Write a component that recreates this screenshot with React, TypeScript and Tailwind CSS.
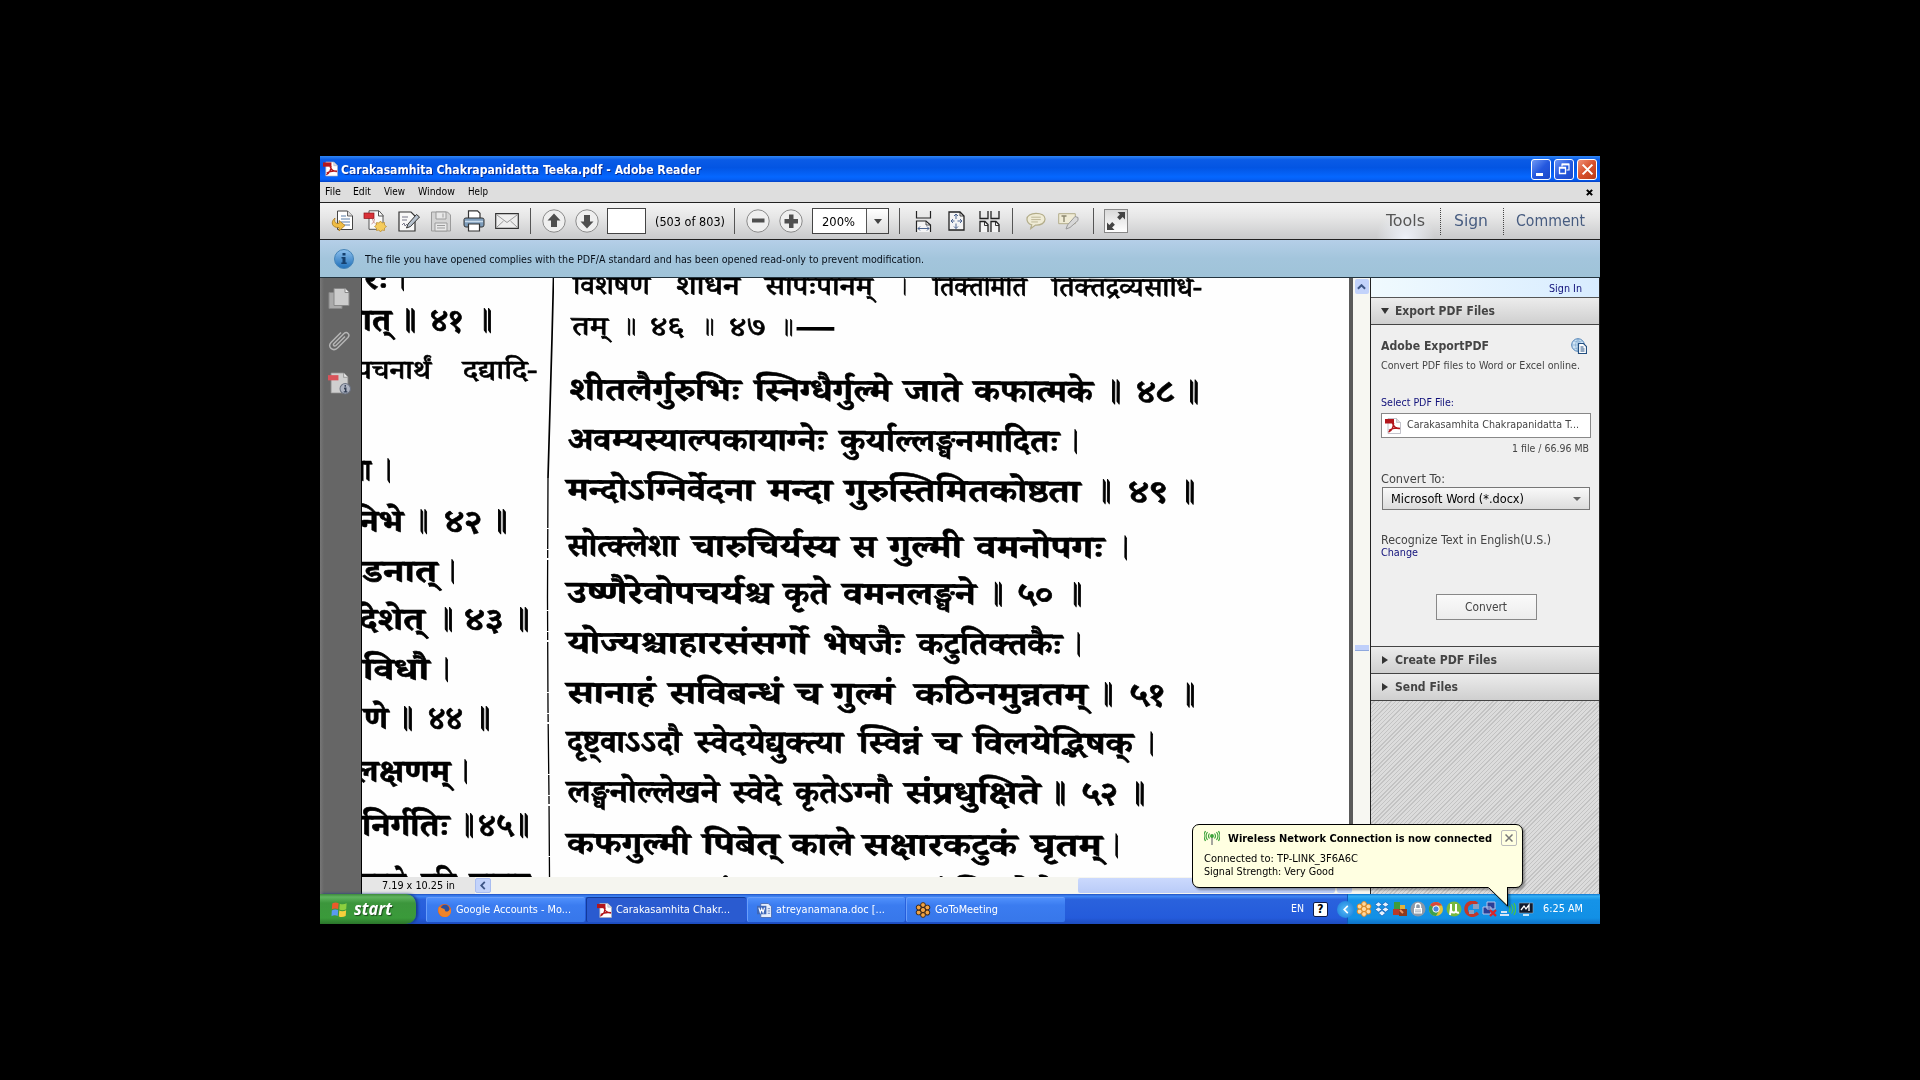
import React, { useLayoutEffect, useRef } from "react";
import clsx from "clsx";

interface FitProps {
  w: number;
  className?: string;
  ml?: number;
  children: React.ReactNode;
}

// Text stretched to an exact width, whatever font is available
function Fit({ w, className, ml = 0, children }: FitProps) {
  const ref = useRef<HTMLSpanElement>(null);
  useLayoutEffect(() => {
    const el = ref.current;
    if (!el) return;
    el.style.transform = "none";
    const natural = el.getBoundingClientRect().width;
    if (natural > 0) el.style.transform = `scaleX(${w / natural})`;
  }, [w, children]);
  return (
    <span className={clsx("block flex-none", className)} style={{ width: w, marginLeft: ml }}>
      <span ref={ref} className="inline-block origin-left whitespace-pre">
        {children}
      </span>
    </span>
  );
}

type Word = [x: number, end: number, text: string];
interface Line {
  y: number;
  small?: boolean;
  words: Word[];
}

const leftLines: Line[] = [
  { y: 268, words: [[364, 388, "रः"], [399, 405, "।"]] },
  { y: 310, words: [[344, 391, "नात्"], [403, 416, "॥"], [430, 463, "४१"], [481, 492, "॥"]] },
  { y: 361, small: true, words: [[356, 431, "पचनार्थं"], [463, 537, "दद्यादि-"]] },
  { y: 460, words: [[352, 371, "ना"], [385, 391, "।"]] },
  { y: 511, words: [[350, 403, "निभे"], [418, 428, "॥"], [444, 482, "४२"], [495, 507, "॥"]] },
  { y: 561, words: [[362, 437, "डनात्"], [449, 455, "।"]] },
  { y: 609, words: [[359, 424, "देशेत्"], [442, 453, "॥"], [464, 503, "४३"], [517, 529, "॥"]] },
  { y: 659, words: [[363, 429, "विधौ"], [443, 449, "।"]] },
  { y: 708, words: [[364, 388, "णे"], [401, 413, "॥"], [428, 463, "४४"], [478, 490, "॥"]] },
  { y: 761, words: [[354, 450, "लक्षणम्"], [462, 468, "।"]] },
  { y: 815, words: [[362, 449, "निर्गतिः"], [463, 474, "॥"], [478, 513, "४५"], [517, 529, "॥"]] },
  { y: 873, words: [[358, 406, "लवणे"], [422, 456, "हृदि"], [470, 530, "सामान"]] },
];

const rightLines: Line[] = [
  { y: 276, small: true, words: [[573, 650, "विशेषेण"], [676, 740, "शोधनं"], [765, 873, "सर्पिःपानम्"], [901, 907, "।"], [933, 1027, "तिक्तमिति"], [1052, 1202, "तिक्तद्रव्यसाधि-"]] },
  { y: 317, small: true, words: [[572, 608, "तम्"], [624, 637, "॥"], [650, 684, "४६"], [703, 715, "॥"], [729, 766, "४७"], [782, 794, "॥"], [798, 833, "—"]] },
  { y: 379, words: [[569, 741, "शीतलैर्गुरुभिः"], [755, 891, "स्निग्धैर्गुल्मे"], [904, 961, "जाते"], [974, 1093, "कफात्मके"], [1109, 1121, "॥"], [1136, 1175, "४८"], [1187, 1199, "॥"]] },
  { y: 429, words: [[568, 826, "अवम्यस्याल्पकायाग्नेः"], [840, 1059, "कुर्याल्लङ्घनमादितः"], [1072, 1078, "।"]] },
  { y: 479, words: [[567, 754, "मन्दोऽग्निर्वेदना"], [769, 832, "मन्दा"], [845, 1080, "गुरुस्तिमितकोष्ठता"], [1100, 1111, "॥"], [1128, 1168, "४९"], [1183, 1195, "॥"]] },
  { y: 535, words: [[567, 678, "सोत्क्लेशा"], [692, 838, "चारुचिर्यस्य"], [852, 876, "स"], [889, 962, "गुल्मी"], [976, 1104, "वमनोपगः"], [1122, 1128, "।"]] },
  { y: 582, words: [[567, 772, "उष्णैरेवोपचर्यश्च"], [784, 829, "कृते"], [843, 976, "वमनलङ्घने"], [992, 1003, "॥"], [1017, 1053, "५०"], [1071, 1082, "॥"]] },
  { y: 632, words: [[567, 808, "योज्यश्चाहारसंसर्गो"], [823, 903, "भेषजैः"], [918, 1062, "कटुतिक्तकैः"], [1075, 1081, "।"]] },
  { y: 682, words: [[567, 655, "सानाहं"], [669, 782, "सविबन्धं"], [796, 821, "च"], [833, 894, "गुल्मं"], [915, 1087, "कठिनमुन्नतम्"], [1102, 1113, "॥"], [1129, 1165, "५१"], [1184, 1195, "॥"]] },
  { y: 731, words: [[567, 681, "दृष्ट्वाऽऽदौ"], [696, 843, "स्वेदयेद्युक्त्या"], [859, 921, "स्विन्नं"], [934, 960, "च"], [974, 1133, "विलयेद्भिषक्"], [1148, 1154, "।"]] },
  { y: 781, words: [[567, 719, "लङ्घनोल्लेखने"], [732, 781, "स्वेदे"], [795, 891, "कृतेऽग्नौ"], [905, 1040, "संप्रधुक्षिते"], [1053, 1066, "॥"], [1081, 1118, "५२"], [1133, 1145, "॥"]] },
  { y: 833, words: [[567, 690, "कफगुल्मी"], [703, 779, "पिबेत्"], [791, 853, "काले"], [863, 1017, "सक्षारकटुकं"], [1032, 1102, "घृतम्"], [1113, 1119, "।"]] },
  { y: 881, words: [[660, 730, "सनागं"], [880, 945, "पलानां"], [955, 1055, "त्रिवृतेनै"]] },
];

function TextColumn({ lines, left, top }: { lines: Line[]; left: number; top: number }) {
  return (
    <div className="flex flex-col font-bold">
      {lines.map((line, i) => {
        const next = lines[i + 1];
        const height = next ? next.y - line.y : 40;
        return (
          <div
            key={line.y}
            className={clsx(
              "flex flex-none origin-top-left",
              left > 400 && "rotate-[0.22deg]",
              line.small
                ? "text-[27px] font-medium [-webkit-text-stroke:0.6px_#000]"
                : "text-[32px] [-webkit-text-stroke:0.6px_#000]"
            )}
            style={{ height, marginTop: i === 0 ? line.y - top : 0 }}
          >
            {line.words.map(([x, end, text], j) => {
              const danda = text === "॥" || text === "।";
              return (
                <Fit
                  key={j}
                  w={end - x}
                  ml={x - (j ? line.words[j - 1][1] : left)}
                  className={clsx(
                    "h-0 leading-[32px]",
                    line.small ? "-mt-[2px]" : danda ? "mt-[1px] text-[37px] [-webkit-text-stroke:1.8px_#000]" : "mt-0",
                    text === "—" && "[-webkit-text-stroke:2px_#000]"
                  )}
                >
                  {text}
                </Fit>
              );
            })}
          </div>
        );
      })}
    </div>
  );
}

function PdfIcon({ className }: { className?: string }) {
  return (
    <svg viewBox="0 0 16 16" className={clsx("flex-none", className)}>
      <path d="M3 .5h8.500l4 4v11H3z" fill="#fff" stroke="#a9a9b5" strokeWidth=".7" />
      <path d="M11.500 .5v4h4" fill="#ddd" stroke="#a9a9b5" strokeWidth=".6" />
      <path d="M0 1h9v4.500H0z" fill="#b3161c" />
      <path d="M7.500 5c1 3.500 4 6 7.500 5.500M8.500 5c0 4-2 8-5 9M4 12.500c3-2 7-3 11-2" fill="none" stroke="#b3161c" strokeWidth="1.600" />
    </svg>
  );
}

function Sep({ ml }: { ml: number }) {
  return <div className="h-[26px] w-px flex-none bg-[#555]" style={{ marginLeft: ml }} />;
}

function TitleBar() {
  return (
    <div className="flex h-[26px] flex-none items-center bg-[linear-gradient(#2f86f5_0,#0a5be6_15%,#0355e3_45%,#0567ff_80%,#0560f6_90%,#0340c4_100%)]">
      <PdfIcon className="ml-[3px] h-[16px] w-[15px]" />
      <Fit w={360} ml={3} className="mt-[1px] text-[13px] leading-[16px] font-bold text-white [text-shadow:1px_1px_#0a2a90]">
        Carakasamhita Chakrapanidatta Teeka.pdf - Adobe Reader
      </Fit>
      <div className="mr-[3px] ml-auto flex gap-[3px]">
        <div className="h-[21px] w-[20px] rounded-[3px] border border-white bg-[linear-gradient(135deg,#6f98f5,#2458df_50%,#1c48c8)]">
          <div className="mt-[13px] ml-[4px] h-[3px] w-[7px] bg-white" />
        </div>
        <div className="flex h-[21px] w-[20px] items-center justify-center rounded-[3px] border border-white bg-[linear-gradient(135deg,#6f98f5,#2458df_50%,#1c48c8)]">
          <svg viewBox="0 0 12 12" className="h-[12px] w-[12px]" fill="none" stroke="#fff">
            <path d="M4 3.500V1h7v6H8.500" strokeWidth="1.200" />
            <path d="M4 1.500h7" strokeWidth="1.800" />
            <path d="M1.500 4.500h6v6h-6zM1.500 5h6" strokeWidth="1.300" />
          </svg>
        </div>
        <div className="flex h-[21px] w-[20px] items-center justify-center rounded-[3px] border border-white bg-[linear-gradient(135deg,#ef9078,#d8502c_50%,#b93a16)]">
          <svg viewBox="0 0 12 12" className="h-[13px] w-[13px]" stroke="#fff" strokeWidth="1.900">
            <path d="M1.500 1.500l9 9M10.500 1.500l-9 9" />
          </svg>
        </div>
      </div>
    </div>
  );
}

function MenuBar() {
  return (
    <div className="flex h-[20px] flex-none items-center bg-[#dedede] text-[11px] text-black">
      <Fit w={16} ml={5}>File</Fit>
      <Fit w={18} ml={12}>Edit</Fit>
      <Fit w={21} ml={13}>View</Fit>
      <Fit w={37} ml={13}>Window</Fit>
      <Fit w={20} ml={13}>Help</Fit>
      <svg viewBox="0 0 8 8" className="mr-[7px] ml-auto h-[7px] w-[7px]" stroke="#000" strokeWidth="2.400">
        <path d="M1 1l6 6M7 1L1 7" />
      </svg>
    </div>
  );
}

function Round({ ml, d }: { ml: number; d: string }) {
  return (
    <svg viewBox="0 0 24 24" className="h-[24px] w-[24px] flex-none" style={{ marginLeft: ml }}>
      <circle cx="12" cy="12" r="11.200" fill="#efefef" stroke="#8a8a8a" strokeWidth="1" />
      <path d={d} fill="#4f4f4f" />
    </svg>
  );
}

function Toolbar() {
  return (
    <div className="flex h-[38px] flex-none items-center border-y border-[#222] bg-[linear-gradient(#f4f4f4,#e6e6e6_40%,#c9cacc)]">
      {/* open */}
      <svg viewBox="0 0 23 22" className="ml-[11px] h-[22px] w-[23px] flex-none">
        <path d="M6.500 1h10l5 5v13.500h-15z" fill="#fff" stroke="#444" />
        <path d="M16.500 1v5h5" fill="#ddd" stroke="#444" strokeWidth=".8" />
        <path d="M10 6h5M10 9h9M10 12h9M12 15h7" stroke="#5b7fa8" strokeWidth="1.200" />
        <path d="M4 8C-1 12 1 18 8 17.500v3.500l6-5.500-6-5v3C4.500 14 3 12 4 8z" fill="#efbd45" stroke="#a9781d" strokeWidth=".8" />
      </svg>
      {/* create */}
      <svg viewBox="0 0 23 22" className="ml-[9px] h-[22px] w-[24px] flex-none">
        <path d="M5.500 .8h10l4 4.500v14h-14z" fill="#fafafa" stroke="#555" />
        <path d="M15 1v5h5" fill="none" stroke="#555" />
        <rect x=".5" y="3" width="10" height="5.500" fill="#d93238" stroke="#8c1217" strokeWidth=".7" />
        <path d="M9 9c1 4 3 5 5 6M8 14c2-1 3-3 3-5" fill="none" stroke="#c99" />
        <path d="M17 11l1.500 2 2.500-.5v2.500l2 1.500-2 1.500v2.500l-2.500-.5L17 22l-1.500-2-2.500.5V18l-2-1.500 2-1.500v-2.500l2.500.5z" fill="#f5cc5c" stroke="#b98a2b" strokeWidth=".7" />
      </svg>
      {/* sign */}
      <svg viewBox="0 0 22 21" className="ml-[11px] h-[21px] w-[22px] flex-none">
        <path d="M1 1h12l4 4v15H1z" fill="#f8f8f8" stroke="#333" strokeWidth="1.200" />
        <path d="M4 6h6M4 9h5M4 14l2-2 1 3 2-2" stroke="#778" fill="none" />
        <path d="M18.500 3.500l3 2.500-9 9.500-4 1.500 1.500-4z" fill="#b7c2ce" stroke="#333" />
      </svg>
      {/* save */}
      <svg viewBox="0 0 20 21" className="ml-[11px] h-[21px] w-[20px] flex-none" stroke="#9b9b9b" fill="#d4d4d4">
        <path d="M.5 1h16l3 3v16H.5z" />
        <path d="M5 1h10v7H5zM4 12h12v8H4z" fill="#e8e8e8" />
        <path d="M6 14.500h8M6 17h8M12 2.500v4" />
      </svg>
      {/* print */}
      <svg viewBox="0 0 22 22" className="ml-[12px] h-[22px] w-[22px] flex-none" stroke="#333">
        <path d="M5.500 9V.8h9l2.500 2.500V9" fill="#fff" strokeWidth="1.200" />
        <path d="M1 9.500Q1 8 3 8h16q2 0 2 1.500V15q0 2-2 2H3q-2 0-2-2z" fill="#7d9cba" />
        <path d="M2 11.500h18" stroke="#c8dbeb" strokeWidth="1.500" />
        <path d="M5.500 14h11v7h-11z" fill="#fff" strokeWidth="1.200" />
      </svg>
      {/* mail */}
      <svg viewBox="0 0 24 16" className="ml-[10px] h-[16px] w-[24px] flex-none">
        <path d="M.7.700h22.600v14.600H.7z" fill="#eee" stroke="#333" strokeWidth="1.200" />
        <path d="M2 2l10 7.500L22 2M2 14l6.500-6M22 14l-6.500-6" fill="none" stroke="#999" />
      </svg>
      <Sep ml={11} />
      <Round ml={11} d="M12 4.500l6.500 7H15v6.500H9v-6.500H5.500z" />
      <Round ml={9} d="M12 19.500l6.500-7H15V6H9v6.500H5.500z" />
      <div className="ml-[8px] h-[26px] w-[39px] flex-none border border-[#444] bg-white" />
      <Fit w={70} ml={9} className="mt-[1px] text-[13px]">(503 of 803)</Fit>
      <Sep ml={9} />
      <Round ml={11} d="M6 9.500h12.500v4H6z" />
      <Round ml={9} d="M10 5.500h4.500V10H19v4.500h-4.500V19H10v-4.500H5.500V10H10z" />
      <div className="ml-[9px] flex h-[26px] w-[77px] flex-none items-center border border-[#444] bg-white">
        <Fit w={33} ml={9} className="mt-[1px] text-[12px]">200%</Fit>
        <div className="ml-auto flex h-full w-[22px] items-center justify-center border-l border-[#555] bg-[linear-gradient(#fff,#ddd)]">
          <svg viewBox="0 0 8 5" className="h-[5px] w-[8px]"><path d="M0 0h8L4 5z" fill="#444" /></svg>
        </div>
      </div>
      <Sep ml={10} />
      {/* scrolling */}
      <svg viewBox="0 0 17 21" className="ml-[15px] h-[21px] w-[17px] flex-none" fill="none" stroke="#222" strokeWidth="1.200">
        <path d="M1.500 0v7h14V0" />
        <path d="M1.500 21V10h9.500l4.500 4v7" fill="#f4f4f4" />
        <path d="M11 10v4h4.500" strokeWidth=".8" />
        <path d="M3 17.500h11M5 15.500l-2 2 2 2M12 15.500l2 2-2 2" stroke="#4d6590" strokeWidth="1" />
      </svg>
      {/* fit page */}
      <svg viewBox="0 0 17 20" className="ml-[16px] h-[20px] w-[17px] flex-none" fill="none">
        <path d="M1 1h11l4 4v14H1z" fill="#f4f4f4" stroke="#222" strokeWidth="1.300" />
        <path d="M12 1v4h4" stroke="#222" strokeWidth=".8" />
        <path d="M8 3v5M8 12.500v5M3 10h3.500M9.500 10H14M6 5l2-2 2 2M6 15.500l2 2 2-2M5 8l-2 2 2 2M12 8l2 2-2 2" stroke="#4d6590" />
      </svg>
      {/* two pages */}
      <svg viewBox="0 0 21 21" className="ml-[14px] h-[21px] w-[21px] flex-none" fill="none" stroke="#222" strokeWidth="1.300">
        <path d="M1 0v7.500h8V0M12 0v7.500h8V0" />
        <path d="M1 21V10.500h5l3 3V21M12 21V10.500h5l3 3V21" fill="#f4f4f4" />
        <path d="M5.500 10.500v4H9M16.500 10.500v4H20" strokeWidth=".9" />
      </svg>
      <Sep ml={12} />
      {/* comment */}
      <svg viewBox="0 0 21 18" className="ml-[13px] h-[18px] w-[20px] flex-none">
        <path d="M10.500 1C5 1 1 3.500 1 7s3 5.500 5 6l-1 4 5-3.700c6 .3 10-2.300 10-6.300s-4-6-9.500-6z" fill="#efebd5" stroke="#b3ad8a" strokeWidth="1.300" />
        <path d="M5.500 5h10M5.500 7.500h10M5.500 10h7" stroke="#b9b394" />
      </svg>
      {/* highlight text */}
      <svg viewBox="0 0 21 18" className="ml-[12px] h-[18px] w-[21px] flex-none">
        <path d="M.7 1.700h16.600v10H.7z" fill="#efebd5" stroke="#b3ad8a" />
        <path d="M3.500 4h5M6 4v6" stroke="#8d8870" strokeWidth="1.400" />
        <path d="M17 4.500l3 1v3l-8 7-4 1.500 1.500-4z" fill="#d8d8d8" stroke="#999" />
      </svg>
      <Sep ml={14} />
      <div className="ml-[10px] flex h-[24px] w-[24px] flex-none items-center justify-center border border-[#888] bg-[linear-gradient(#d9d9d9,#fff)]">
        <svg viewBox="0 0 20 20" className="h-[20px] w-[20px]" fill="#444">
          <path d="M19 1v7.500l-2.400-2.400-2.800 2.800-2.700-2.700 2.800-2.800L11.500 1zM1 19v-7.500l2.400 2.400 2.800-2.800 2.700 2.700-2.800 2.800L8.500 19z" />
        </svg>
      </div>
      <div className="ml-auto flex h-full items-center text-[15px]">
        <div className="flex h-full items-center bg-[radial-gradient(ellipse_at_bottom,#eef2fa,transparent_60%)] px-[15px] text-[#555]">
          <Fit w={39} className="mt-[1px]">Tools</Fit>
        </div>
        <div className="flex h-[27px] items-center border-l border-dotted border-[#444] pr-[15px] pl-[13px] text-[#475c80]">
          <Fit w={34} className="mt-[1px]">Sign</Fit>
        </div>
        <div className="flex h-[27px] items-center border-l border-dotted border-[#444] pr-[15px] pl-[12px] text-[#475c80]">
          <Fit w={69} className="mt-[1px]">Comment</Fit>
        </div>
      </div>
    </div>
  );
}

function InfoBar() {
  return (
    <div className="flex h-[38px] flex-none items-center border-b border-[#23343e] bg-[linear-gradient(#b5cfe8,#a3c5dc_50%,#9fc3d8)]">
      <svg viewBox="0 0 20 20" className="ml-[14px] h-[20px] w-[20px] flex-none">
        <defs>
          <linearGradient id="info" x1="0" y1="0" x2="0" y2="1">
            <stop offset="0" stopColor="#8cc0ee" />
            <stop offset="1" stopColor="#1f6fb8" />
          </linearGradient>
        </defs>
        <circle cx="10" cy="10" r="9.500" fill="url(#info)" stroke="#4584b8" />
        <path d="M8.500 4h3v2.500h-3zM7.500 8h4v5.500h1.200V15H7.300v-1.500h1.200v-4h-1z" fill="#15406e" />
      </svg>
      <Fit w={559} ml={11} className="mt-[3px] text-[11px] text-[#08101a]">
        The file you have opened complies with the PDF/A standard and has been opened read-only to prevent modification.
      </Fit>
    </div>
  );
}

function Sidebar() {
  return (
    <div className="flex w-[42px] flex-none flex-col border-r border-black bg-[linear-gradient(90deg,#777_0,#666_4px)] pl-[8px]">
      <svg viewBox="0 0 22 22" className="mt-[9px] h-[23px] w-[22px]" fill="#c9c9c9" stroke="#888">
        <path d="M1 5h13v16H1z" fill="#aaa" />
        <path d="M6 1h11l4 4v13H6z" fill="#ccc" />
        <path d="M17 1v4h4" fill="#eee" />
      </svg>
      <svg viewBox="0 0 22 22" className="mt-[19px] h-[23px] w-[22px]" fill="none" stroke="#b5b5b5" strokeWidth="1.500">
        <path d="M17 7l-9 9c-1.500 1.500-3.500-.5-2-2l10-10c3-2.500 6.500 1 4 4L9.500 18.500c-4.500 4-10.500-1-6.500-5.500L13 3" />
      </svg>
      <svg viewBox="0 0 22 22" className="mt-[20px] h-[23px] w-[23px]">
        <path d="M3 1h12l4 4v15H3z" fill="#cfcfcf" stroke="#999" strokeWidth=".7" />
        <path d="M15 1v4h4" fill="#eee" stroke="#999" />
        <path d="M0 3h10v5H0z" fill="#d9535a" />
        <circle cx="16.500" cy="16" r="5" fill="#aeb4c2" stroke="#6b7280" />
        <path d="M16.500 12.500v1.500M15.500 15.500h1.500v3.500M15 19h3.500" stroke="#333f55" strokeWidth="1.300" />
      </svg>
    </div>
  );
}

function Page() {
  return (
    <div className="flex min-h-0 flex-1">
      <div className="relative flex w-[987px] flex-none overflow-hidden bg-[#fefefe] font-['Noto_Serif_Devanagari','Noto_Sans_Devanagari','Lohit_Devanagari','Noto_Sans',serif] text-black">
        <div className="w-[180px] flex-none">
          <TextColumn lines={leftLines} left={362} top={278} />
        </div>
        <svg viewBox="0 0 12 599" className="h-[599px] w-[12px] flex-none" fill="none" stroke="#000">
          <path d="M11.500 0L10 60 8 130 6 200" strokeWidth="1.700" />
          <path d="M6 200L5.500 320 6 430 7 520 7.500 599" strokeWidth="1.300" strokeDasharray="50 1 20 1 8 2" />
        </svg>
        <div className="w-[795px] flex-none">
          <TextColumn lines={rightLines} left={554} top={278} />
        </div>
      </div>
      <div className="w-[4px] flex-none bg-[#5a5a5a]" />
      <div className="flex w-[17px] flex-none flex-col items-center bg-[#f7f7f2]">
        <div className="mt-px flex h-[15px] w-[14px] flex-none items-center justify-center rounded-[2px] bg-[#c3d3fb]">
          <svg viewBox="0 0 10 6" className="h-[6px] w-[9px]" fill="none" stroke="#3d5585" strokeWidth="2.200"><path d="M1 5l4-4 4 4" /></svg>
        </div>
        <div className="mt-[351px] h-[6px] w-[14px] flex-none border-b border-[#8fa8dd] bg-[#c0d0fa]" />
      </div>
    </div>
  );
}

function StatusRow() {
  return (
    <div className="flex h-[17px] flex-none bg-[#f5f5ef]">
      <div className="flex w-[113px] flex-none items-center bg-[#e6e6e6] text-[11px]">
        <Fit w={73} ml={20} className="mt-[1px]">7.19 x 10.25 in</Fit>
      </div>
      <div className="mt-px flex h-[15px] w-[16px] flex-none items-center justify-center rounded-[2px] border border-[#a9bdf0] bg-[#c3d3fb]">
        <svg viewBox="0 0 6 10" className="h-[9px] w-[6px]" fill="none" stroke="#3d5585" strokeWidth="2"><path d="M5 1L1 5l4 4" /></svg>
      </div>
      <div className="mt-px ml-[587px] h-[15px] w-[257px] flex-none rounded-[2px] bg-[linear-gradient(#cbd9fd,#b9cbf8)]" />
      <div className="mt-px ml-[2px] h-[15px] w-[15px] flex-none rounded-[2px] bg-[#c3d3fb]" />
    </div>
  );
}

function PanelHeader({ title, w, open }: { title: string; w: number; open?: boolean }) {
  return (
    <div className="flex h-[27px] flex-none items-center border-b border-[#444] bg-[linear-gradient(#ececec,#cfcfcf)]">
      <svg viewBox="0 0 8 8" className="ml-[10px] h-[8px] w-[8px] flex-none" fill="#333">
        <path d={open ? "M0 1h8L4 7z" : "M1 0v8l6-4z"} />
      </svg>
      <Fit w={w} ml={6} className="text-[13px] font-bold text-[#444]">{title}</Fit>
    </div>
  );
}

function RightPanel() {
  return (
    <div className="flex w-[230px] flex-none flex-col border-r border-l border-[#222] bg-[#efefef]">
      <div className="flex h-[20px] flex-none items-center justify-end border-b border-[#555] bg-[linear-gradient(90deg,#f0fafe,#d8ecff)] pr-[17px]">
        <Fit w={33} className="mt-[3px] text-[11px] text-[#10107a]">Sign In</Fit>
      </div>
      <PanelHeader title="Export PDF Files" w={100} open />
      <div className="flex h-[322px] flex-none flex-col border-b border-[#444] px-[10px] text-[11px] text-[#444]">
        <div className="mt-[11px] flex h-[20px] items-center">
          <Fit w={108} className="text-[13px] font-bold">Adobe ExportPDF</Fit>
          <svg viewBox="0 0 16 16" className="mr-[2px] ml-auto h-[16px] w-[16px]">
            <circle cx="7" cy="7" r="6.300" fill="#cfe4f5" stroke="#4b7fb5" />
            <path d="M1 7h12M7 1v12M3 3q4 2 8 0M3 11q4-2 8 0M7 1q-5 6 0 12M7 1q5 6 0 12" fill="none" stroke="#7fa9d0" strokeWidth=".7" />
            <path d="M7.500 5.500h5l3 3v7h-8z" fill="#fff" stroke="#234f80" strokeWidth="1.200" />
            <path d="M9.500 9h3M9.500 11h4M9.500 13h4" stroke="#234f80" />
          </svg>
        </div>
        <Fit w={199} className="mt-[2px] leading-[16px]">Convert PDF files to Word or Excel online.</Fit>
        <Fit w={73} className="mt-[21px] leading-[16px] text-[#10107a]">Select PDF File:</Fit>
        <div className="mt-[2px] flex h-[25px] w-[210px] items-center border border-[#888] bg-white">
          <PdfIcon className="ml-[3px] h-[16px] w-[16px]" />
          <Fit w={172} ml={6} className="-mt-[2px] leading-[16px]">Carakasamhita Chakrapanidatta T...</Fit>
        </div>
        <Fit w={77} ml={131} className="mt-[3px] leading-[16px]">1 file / 66.96 MB</Fit>
        <Fit w={64} className="mt-[14px] text-[12px] leading-[16px]">Convert To:</Fit>
        <div className="ml-[1px] flex h-[23px] w-[208px] items-center border border-[#777] bg-[linear-gradient(#f9f9f9,#dcdcdc)]">
          <Fit w={133} ml={8} className="text-[13px] text-black">Microsoft Word (*.docx)</Fit>
          <svg viewBox="0 0 8 4" className="mr-[8px] ml-auto h-[4px] w-[8px]"><path d="M0 0h8L4 4z" fill="#666" /></svg>
        </div>
        <Fit w={170} className="mt-[23px] text-[12px] leading-[15px]">Recognize Text in English(U.S.)</Fit>
        <Fit w={37} className="-mt-[2px] leading-[13px] text-[#10107a]">Change</Fit>
        <div className="mt-[35px] ml-[55px] flex h-[26px] w-[101px] items-center justify-center border border-[#888] bg-[linear-gradient(#fafafa,#ececec)]">
          <Fit w={42} ml={-1} className="text-[12px]">Convert</Fit>
        </div>
      </div>
      <PanelHeader title="Create PDF Files" w={102} />
      <PanelHeader title="Send Files" w={63} />
      <div className="flex-1 bg-[repeating-linear-gradient(135deg,#dcdcdc_0,#dcdcdc_2px,#c3c3c3_2px,#c3c3c3_3px)]" />
    </div>
  );
}

function GearFlower({ className, petal, core }: { className?: string; petal: string; core: string }) {
  return (
    <svg viewBox="0 0 16 16" className={clsx("flex-none", className)}>
      {[0, 60, 120, 180, 240, 300].map((a) => (
        <circle key={a} cx="8" cy="3" r="2.400" fill={petal} stroke={core} strokeWidth=".9" transform={`rotate(${a} 8 8)`} />
      ))}
      <circle cx="8" cy="8" r="2.600" fill={petal} stroke={core} />
    </svg>
  );
}

interface TaskButtonProps {
  icon: React.ReactNode;
  label: string;
  w: number;
  active?: boolean;
  iconMl: number;
  width: number;
}

function TaskButton({ icon, label, w, active, iconMl, width }: TaskButtonProps) {
  return (
    <div
      className={clsx(
        "flex h-[25px] flex-none items-center gap-[4px] rounded-[2px] border-t border-l",
        active ? "border-[#123a9a] bg-[#2a5bd0]" : "border-[#6a9efa] bg-[linear-gradient(#4f90fb,#3b7cf0_30%,#3777ea)]"
      )}
      style={{ paddingLeft: iconMl, width }}
    >
      {icon}
      <Fit w={w} className="text-[11px] text-white">{label}</Fit>
    </div>
  );
}

function TrayIcons() {
  return (
    <div className="ml-[2px] flex items-center gap-[2px]">
      <GearFlower className="h-[16px] w-[16px]" petal="#ffd9a0" core="#e58a1e" />
      <svg viewBox="0 0 16 16" className="h-[16px] w-[16px]">
        <path d="M4.500 1L8 3.500 4.500 6 1 3.500zM11.500 1L15 3.500 11.500 6 8 3.500zM4.500 6L8 8.500 4.500 11 1 8.500zM11.500 6L15 8.500 11.500 11 8 8.500zM8 9.500l3.500 2.500L8 15l-3.500-3z" fill="#e8f3ff" stroke="#1262b8" strokeWidth=".7" />
      </svg>
      <svg viewBox="0 0 16 16" className="h-[16px] w-[16px]">
        <path d="M2 1h6v7H2z" fill="#3f9c3a" /><path d="M8 4h5v5H8z" fill="#e0b33c" /><path d="M1 8h7v6H1z" fill="#b83a28" /><path d="M7 8h8v7H7z" fill="#8c3b1f" /><path d="M8 9l3 3" stroke="#e96" strokeWidth="2" />
      </svg>
      <svg viewBox="0 0 16 16" className="h-[16px] w-[16px]">
        <circle cx="8" cy="8" r="7.500" fill="#8d99a8" />
        <path d="M5.500 7V5a2.500 2.500 0 015 0v2" fill="none" stroke="#fff" strokeWidth="1.400" />
        <path d="M4 7h8v5.500H4z" fill="#fff" /><path d="M5 9h6M5 10.800h6" stroke="#8d99a8" strokeWidth=".8" />
      </svg>
      <svg viewBox="0 0 16 16" className="h-[16px] w-[16px]">
        <circle cx="8" cy="8" r="7" fill="#e2c23a" />
        <path d="M8 8L2 4.300A7 7 0 0114 4.500H8z" fill="#d9483b" /><path d="M2 4.300A7 7 0 008 15l3-5.500z" fill="#3fa04c" />
        <circle cx="8" cy="8" r="3.200" fill="#4a86e0" stroke="#fff" />
      </svg>
      <svg viewBox="0 0 16 16" className="h-[16px] w-[16px]">
        <circle cx="8" cy="8" r="7.500" fill="#76b83f" />
        <path d="M5 3v5.500c0 4 5 4 5 .5V3M10 9c0 2 1 3 3 2.500M4 14l1-7" fill="none" stroke="#fff" strokeWidth="2" />
      </svg>
      <svg viewBox="0 0 16 16" className="h-[16px] w-[16px]">
        <path d="M13 3C8-1 2 3 2 8s6 9 12 4" fill="none" stroke="#c3372a" strokeWidth="3.500" />
        <path d="M9 3h6v5H9zM5 9h5v4H5z" fill="#8a9fc0" />
      </svg>
      <svg viewBox="0 0 16 16" className="h-[16px] w-[16px]">
        <path d="M5 1h8v7H5zM1 6h8v7H1z" fill="#2b3f96" stroke="#b8c5ea" />
        <path d="M8 9l6 6M14 9l-6 6" stroke="#d8252a" strokeWidth="2.300" />
      </svg>
      <svg viewBox="0 0 16 16" className="h-[16px] w-[16px]">
        <path d="M1 10h6v2H1zM0 13h9v2H0z" fill="#d7e5f5" />
        <path d="M9 5q2 3 0 6M11.500 3.500q3 4.500 0 9M14 2q3.500 6 0 12" fill="none" stroke="#48c24d" strokeWidth="1.300" />
      </svg>
      <svg viewBox="0 0 16 16" className="h-[16px] w-[16px]">
        <path d="M1 2h14v10H1z" fill="#111a2c" stroke="#9ab" strokeWidth=".6" />
        <path d="M3 9l3-4 2 3 3-4v6M5 14h6" stroke="#fff" fill="none" strokeWidth="1.300" />
      </svg>
    </div>
  );
}

function Taskbar() {
  return (
    <div className="flex h-[30px] flex-none items-center bg-[linear-gradient(#1f4fc0_0,#3f86f5_7%,#2a62dd_18%,#245bdb_80%,#1d4cbd_100%)]">
      <div className="flex h-full w-[96px] flex-none items-center rounded-r-[10px] bg-[linear-gradient(#3d8a3d_0,#5fb45f_10%,#3c963c_30%,#3a9a3a_80%,#2b752b_100%)] shadow-[2px_0_3px_#163a8a]">
        <svg viewBox="0 0 16 16" className="ml-[11px] h-[17px] w-[17px] -rotate-3">
          <path d="M1.500 2q3-1.500 6 0L6.800 7.500q-3-1.500-6 0z" fill="#ea5a2a" />
          <path d="M8.500 2.500q3 1.500 6.500 0L14.300 8q-3.500 1.500-6.500 0z" fill="#8ccf3f" />
          <path d="M.7 8.500q3-1.500 6 0L6 14q-3-1.500-6 0z" fill="#5a9af0" />
          <path d="M7.700 9q3 1.500 6.500 0l-.7 5.500q-3.500 1.500-6.500 0z" fill="#f5cf3c" />
        </svg>
        <Fit w={38} ml={6} className="-mt-[2px] font-['Open_Sans',sans-serif] text-[18px] leading-[24px] font-bold text-white italic [text-shadow:1px_1px_1px_#1c4d1c]">start</Fit>
      </div>
      <div className="ml-[10px] flex gap-[1px] pt-[1px]">
        <TaskButton
          width={159}
          iconMl={10}
          w={115}
          label="Google Accounts - Mo..."
          icon={
            <svg viewBox="0 0 16 16" className="h-[15px] w-[15px] flex-none">
              <circle cx="8" cy="8" r="7" fill="#e8641c" />
              <circle cx="8.500" cy="6.500" r="4.700" fill="#2b4f9e" />
              <path d="M2 4c2 0 3 2 5 2s1 3 3 3 3-1 4.500-3C16 12 12 15 8 15S0 10 2 4z" fill="#f0842a" />
            </svg>
          }
        />
        <TaskButton width={160} iconMl={10} w={114} label="Carakasamhita Chakr..." active icon={<PdfIcon className="h-[15px] w-[15px]" />} />
        <TaskButton
          width={158}
          iconMl={9}
          w={109}
          label="atreyanamana.doc [..."
          icon={
            <svg viewBox="0 0 16 16" className="h-[15px] w-[15px] flex-none">
              <path d="M4 .5h8l3.500 3.500v11.500H4z" fill="#e6eefb" stroke="#4a6db5" />
              <path d="M0 3h10v9H0z" fill="#3f68b8" />
              <path d="M2 5l1.500 5L5 6l1.500 4L8 5" fill="none" stroke="#fff" strokeWidth="1.200" />
              <path d="M11.500 6H14M11.500 8.500H14M11.500 11H14" stroke="#6a88c4" />
            </svg>
          }
        />
        <TaskButton width={159} iconMl={8} w={63} label="GoToMeeting" icon={<GearFlower className="h-[16px] w-[16px]" petal="#f2a444" core="#3c2410" />} />
      </div>
      <Fit w={13} className="!ml-auto mt-[1px] text-[11px] text-white">EN</Fit>
      <div className="ml-[9px] flex h-[15px] w-[15px] flex-none items-center justify-center rounded-[2px] border border-[#0d1b4a] bg-white text-[12px] leading-none font-bold text-black">
        ?
      </div>
      <div className="ml-[19px] flex h-full w-[253px] flex-none items-center border-l border-[#0f5ab8] bg-[linear-gradient(#0c74d0_0,#35b0f5_7%,#1593e8_20%,#1290e5_80%,#0e70c4_100%)]">
        <div className="-ml-[11px] flex h-[17px] w-[17px] flex-none items-center justify-center rounded-full bg-[radial-gradient(#55bdf8,#1577d8)]">
          <svg viewBox="0 0 6 10" className="h-[9px] w-[6px]" fill="none" stroke="#fff" strokeWidth="1.800"><path d="M5 1L1 5l4 4" /></svg>
        </div>
        <TrayIcons />
        <Fit w={40} ml={9} className="mt-[1px] text-[11px] text-white">6:25 AM</Fit>
      </div>
    </div>
  );
}

function Balloon() {
  return (
    <div className="absolute top-[668px] left-[872px] w-[331px] text-[11px] text-black drop-shadow-[2px_2px_1px_rgba(0,0,0,0.35)]">
      <div className="h-[64px] rounded-[7px] border border-black bg-[#ffffe1] px-[11px]">
        <div className="mt-[4px] flex h-[18px] items-center">
          <svg viewBox="0 0 16 16" className="h-[16px] w-[16px]" fill="none" stroke="#3da33a" strokeWidth="1.200">
            <path d="M5.500 3.500q-2 2.500 0 5M3.500 2q-3 4 0 8M1.500 1q-3 5 0 10M10.500 3.500q2 2.500 0 5M12.500 2q3 4 0 8M14.500 1q3 5 0 10" />
            <path d="M8 6v9" stroke="#888" strokeWidth="1.500" />
            <circle cx="8" cy="6" r="1.300" fill="#3da33a" />
          </svg>
          <Fit w={264} ml={8} className="mt-[2px] font-bold">Wireless Network Connection is now connected</Fit>
          <div className="-mr-[6px] ml-auto flex h-[16px] w-[16px] items-center justify-center rounded-[2px] border border-[#bbb]">
            <svg viewBox="0 0 8 8" className="h-[8px] w-[8px]" stroke="#777" strokeWidth="1.500"><path d="M.5.500l7 7M7.500.500l-7 7" /></svg>
          </div>
        </div>
        <Fit w={154} className="mt-[5px] leading-[13px]">Connected to: TP-LINK_3F6A6C</Fit>
        <Fit w={130} className="leading-[13px]">Signal Strength: Very Good</Fit>
      </div>
      <svg viewBox="0 0 22 20" className="-mt-px ml-[295px] block h-[20px] w-[22px]">
        <path d="M1 0l19.500 19V0" fill="#ffffe1" stroke="#000" />
        <path d="M1.700 0h18.300" stroke="#ffffe1" strokeWidth="2" />
      </svg>
    </div>
  );
}

export default function App() {
  return (
    <div className="h-[1080px] w-[1920px] overflow-hidden bg-black pt-[156px] pl-[320px] font-['DejaVu_Sans_Condensed','DejaVu_Sans',sans-serif]">
      <div className="relative flex h-[768px] w-[1280px] flex-col overflow-hidden">
        <TitleBar />
        <MenuBar />
        <Toolbar />
        <InfoBar />
        <div className="flex min-h-0 flex-1">
          <Sidebar />
          <div className="flex w-[1008px] flex-none flex-col">
            <Page />
            <StatusRow />
          </div>
          <RightPanel />
        </div>
        <Taskbar />
        <Balloon />
      </div>
    </div>
  );
}
